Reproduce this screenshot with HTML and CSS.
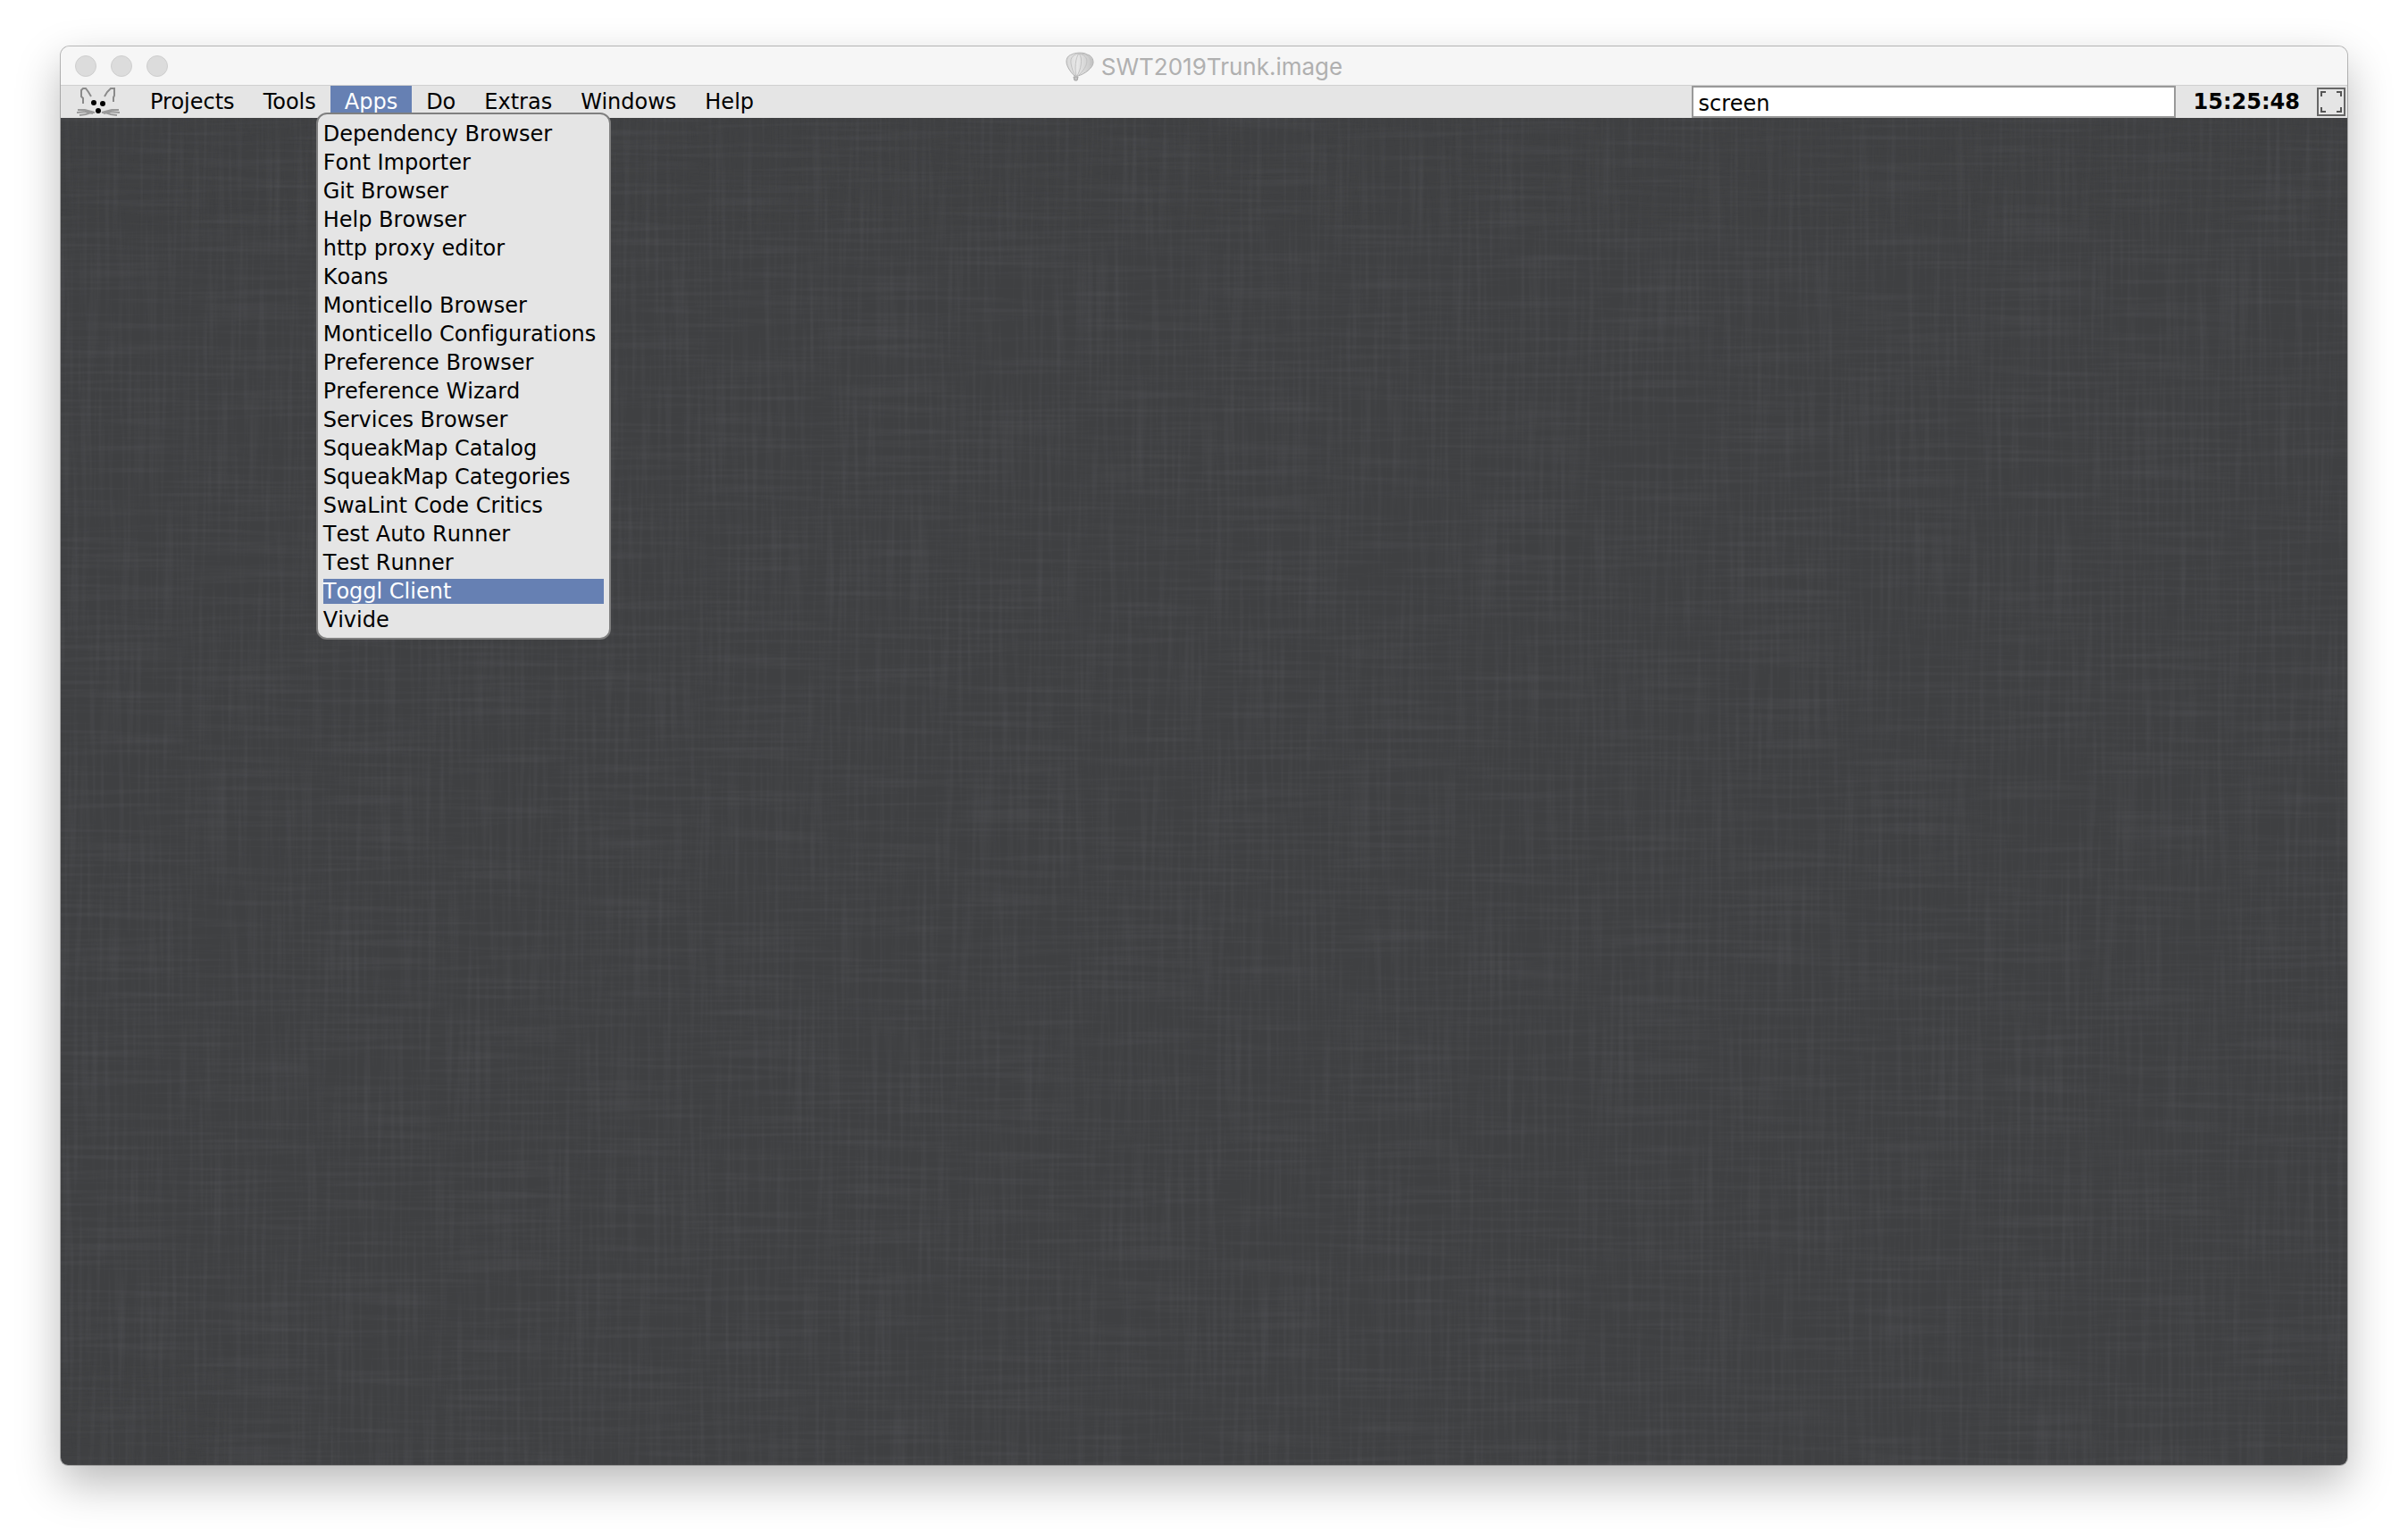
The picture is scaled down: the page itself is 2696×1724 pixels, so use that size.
FILE: index.html
```html
<!DOCTYPE html>
<html lang="en">
<head>
<meta charset="utf-8">
<title>SWT2019Trunk.image</title>
<link rel="stylesheet" href="styles.css">
</head>
<body>
<div class="window">
  <header class="titlebar">
    <div class="lights">
      <button class="light" type="button" aria-label="Close"></button>
      <button class="light" type="button" aria-label="Minimize"></button>
      <button class="light" type="button" aria-label="Zoom"></button>
    </div>
    <h1 class="title">
      <svg class="balloon" viewBox="0 0 32 34" aria-hidden="true">
        <defs>
          <linearGradient id="envelope" x1="0" y1="0" x2="1" y2="0">
            <stop offset="0" stop-color="#d8d8d8"/>
            <stop offset="0.4" stop-color="#e8e8e8"/>
            <stop offset="1" stop-color="#c4c4c4"/>
          </linearGradient>
        </defs>
        <path d="M1 11C1 7 3 4 7 3C10 1 20 0 24 3C29 4 31 8 31 12C31 18 21 25 14 27H10C7 24 1 17 1 11Z" fill="url(#envelope)" stroke="#b0b0b0"/>
        <path d="M15 2C9 3 5 6 6 13C7 19 9 24 11 27M15 2C11 6 10 20 12 27M15 2C20 7 17 20 13 27M15 2C24 4 25 9 23 15C21 20 16 25 14 27M15 2C27 2 30 9 28 15" fill="none" stroke="#c2c2c2"/>
        <path d="M9 28H14L13 32H10Z" fill="#c4c4c4" stroke="#a2a2a2"/>
      </svg>
      <span>SWT2019Trunk.image</span>
    </h1>
  </header>
  <div class="menubar">
    <button class="mouse" type="button" aria-label="Squeak">
      <svg viewBox="0 0 48 32" aria-hidden="true">
        <g fill="none" stroke="#8a8a8a" stroke-width="2">
          <path d="M7 18V12L5 10V3L7 1H10L13 5L16 10"/>
          <path d="M41 16V11L42 9V1H38L34 5L31 10"/>
          <path d="M1 25H9L20 28M0 28L10 27L18 29M3 31L10 30L16 28M47 25H39L28 28M48 28L38 27L30 29M45 31L38 30L32 28" stroke="#999"/>
        </g>
        <circle cx="19" cy="17" r="3"/><circle cx="29" cy="18" r="3"/><circle cx="24" cy="26" r="3"/>
      </svg>
    </button>
    <nav class="menus">
      <button class="menu" type="button">Projects</button>
      <button class="menu" type="button">Tools</button>
      <div class="dropdown">
        <button class="menu selected" type="button">Apps</button>
        <div class="popup">
          <button class="item" type="button">Dependency Browser</button>
          <button class="item" type="button">Font Importer</button>
          <button class="item" type="button">Git Browser</button>
          <button class="item" type="button">Help Browser</button>
          <button class="item" type="button">http proxy editor</button>
          <button class="item" type="button">Koans</button>
          <button class="item" type="button">Monticello Browser</button>
          <button class="item" type="button">Monticello Configurations</button>
          <button class="item" type="button">Preference Browser</button>
          <button class="item" type="button">Preference Wizard</button>
          <button class="item" type="button">Services Browser</button>
          <button class="item" type="button">SqueakMap Catalog</button>
          <button class="item" type="button">SqueakMap Categories</button>
          <button class="item" type="button">SwaLint Code Critics</button>
          <button class="item" type="button">Test Auto Runner</button>
          <button class="item" type="button">Test Runner</button>
          <button class="item selected" type="button">Toggl Client</button>
          <button class="item" type="button">Vivide</button>
        </div>
      </div>
      <button class="menu" type="button">Do</button>
      <button class="menu" type="button">Extras</button>
      <button class="menu" type="button">Windows</button>
      <button class="menu" type="button">Help</button>
    </nav>
    <input class="search" type="text" value="screen" aria-label="Search">
    <time class="clock">15:25:48</time>
    <button class="fullscreen" type="button" aria-label="Full screen">
      <svg viewBox="0 0 28 28" aria-hidden="true">
        <path d="M3 8V3H8M20 3H25V8M25 20V25H20M8 25H3V20" fill="none" stroke="#555" stroke-width="2"/>
      </svg>
    </button>
  </div>
  <main class="world">
    <svg class="linen" aria-hidden="true">
      <filter id="across" x="0" y="0" width="1" height="1" color-interpolation-filters="sRGB">
        <feTurbulence type="fractalNoise" baseFrequency="0.007 0.2" numOctaves="2" seed="4"/>
        <feColorMatrix values="0 0 0 0 0.5  0 0 0 0 0.5  0 0 0 0 0.53  1 0 0 0 -0.42"/>
      </filter>
      <filter id="down" x="0" y="0" width="1" height="1" color-interpolation-filters="sRGB">
        <feTurbulence type="fractalNoise" baseFrequency="0.2 0.007" numOctaves="2" seed="9"/>
        <feColorMatrix values="0 0 0 0 0.5  0 0 0 0 0.5  0 0 0 0 0.53  1 0 0 0 -0.42"/>
      </filter>
      <rect width="100%" height="100%" filter="url(#across)" opacity="0.24"/>
      <rect width="100%" height="100%" filter="url(#down)" opacity="0.24"/>
    </svg>
  </main>
</div>
</body>
</html>
```
FILE: styles.css
```css
* { box-sizing: border-box; }

body {
  margin: 0;
  min-height: 100vh;
  padding: 52px 68px 84px;
  display: flex;
  background: #fff;
  color: #000;
  font: 24px/28px "DejaVu Sans", sans-serif;
}

button {
  border: 0;
  margin: 0;
  padding: 0;
  background: none;
  color: inherit;
  font: inherit;
}

.window {
  flex: 1;
  display: flex;
  flex-direction: column;
  border-radius: 10px 10px 8px 8px;
  box-shadow: 0 0 0 1px rgba(0, 0, 0, 0.25), 0 20px 50px rgba(0, 0, 0, 0.28);
}

.titlebar {
  height: 44px;
  padding: 0 16px;
  display: grid;
  grid-template-columns: 1fr auto 1fr;
  align-items: center;
  background: #f6f6f6;
  border-bottom: 1px solid #d0d0d0;
  border-radius: 10px 10px 0 0;
}

.lights { display: flex; gap: 16px; }

.light {
  width: 24px;
  height: 24px;
  border: 1px solid #cecece;
  border-radius: 50%;
  background: #dcdcdc;
}

.title {
  margin: 0;
  padding-top: 2px;
  display: flex;
  align-items: center;
  gap: 8px;
  color: #b0b0b0;
  font: 400 26px/32px Inter, sans-serif;
}

.balloon { width: 32px; height: 34px; }

.menubar {
  height: 36px;
  padding: 0 2px 0 16px;
  display: flex;
  align-items: center;
  background: #e5e5e5;
}

.mouse { width: 52px; height: 36px; margin-right: 16px; display: flex; align-items: center; }
.mouse svg { width: 48px; height: 32px; margin-left: 2px; }

.menus { flex: 1; display: flex; }

.menu {
  display: block;
  height: 36px;
  padding: 0 16px;
}

.selected { background: #6680b3; color: #fff; }

.dropdown { position: relative; }

.popup {
  position: absolute;
  z-index: 1;
  top: 30px;
  left: -16px;
  width: 330px;
  padding: 8px 6px 6px;
  display: flex;
  flex-direction: column;
  gap: 4px;
  background: #e5e5e5;
  border: 2px solid #7f7f7f;
  border-radius: 12px;
}

.item {
  height: 28px;
  text-align: left;
  white-space: nowrap;
  font-kerning: none;
  font-variant-ligatures: none;
}

.search {
  width: 542px;
  height: 36px;
  padding: 4px 6px 0;
  border: 2px solid #999;
  border-radius: 0;
  background: #fff;
  color: #000;
  font: inherit;
}

.clock { margin: 0 19px 0 20px; font-weight: 700; }

.fullscreen {
  width: 32px;
  height: 32px;
  border: 2px solid #666;
  display: flex;
}

.world {
  flex: 1;
  display: grid;
  overflow: hidden;
  background: #3f4042;
  border-radius: 0 0 8px 8px;
}

.linen { width: 100%; height: 100%; }
```
